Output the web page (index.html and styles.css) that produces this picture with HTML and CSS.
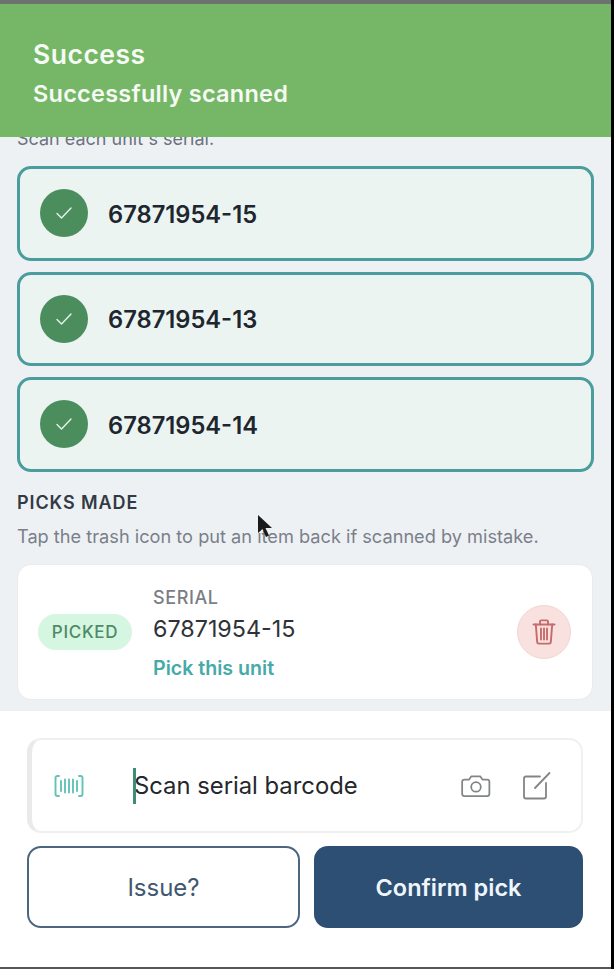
FILE: index.html
```html
<!DOCTYPE html>
<html lang="en">
<head>
<meta charset="utf-8">
<title>Confirm pick</title>
<link rel="stylesheet" href="styles.css">
</head>
<body>
<div class="screen">
  <div class="topline"></div>
  <main class="content">
    <p class="hint-top">Scan each unit's serial.</p>
    <div class="serial-list">
      <div class="serial-card">
        <span class="check"><svg width="20" height="20" viewBox="0 0 20 20" fill="none" stroke="currentColor" stroke-width="1.4" stroke-linecap="round" stroke-linejoin="round"><path d="M3 10.500l4.500 4.500 9.500-10"/></svg></span>
        <span class="serial-no">67871954-15</span>
      </div>
      <div class="serial-card">
        <span class="check"><svg width="20" height="20" viewBox="0 0 20 20" fill="none" stroke="currentColor" stroke-width="1.4" stroke-linecap="round" stroke-linejoin="round"><path d="M3 10.500l4.500 4.500 9.500-10"/></svg></span>
        <span class="serial-no">67871954-13</span>
      </div>
      <div class="serial-card">
        <span class="check"><svg width="20" height="20" viewBox="0 0 20 20" fill="none" stroke="currentColor" stroke-width="1.4" stroke-linecap="round" stroke-linejoin="round"><path d="M3 10.500l4.500 4.500 9.500-10"/></svg></span>
        <span class="serial-no">67871954-14</span>
      </div>
    </div>
    <h2 class="section-title">PICKS MADE</h2>
    <p class="section-hint">Tap the trash icon to put an item back if scanned by mistake.</p>
    <div class="pick-card">
      <span class="badge">PICKED</span>
      <div class="pick-info">
        <span class="pick-label">SERIAL</span>
        <span class="pick-value">67871954-15</span>
        <span class="pick-link">Pick this unit</span>
      </div>
      <button class="trash" type="button" aria-label="Remove">
        <svg width="26" height="28" viewBox="0 0 26 28" fill="none" stroke="currentColor" stroke-width="1.9" stroke-linecap="round" stroke-linejoin="round"><path d="M2.500 6.500h21"/><path d="M9 6.500V3.600q0-1.200 1.200-1.200h5.600q1.200 0 1.200 1.200v2.900"/><path d="M4.800 6.500l1.400 17.600q.1 1.500 1.600 1.500h10.400q1.500 0 1.600-1.500l1.400-17.600"/><path d="M10 10.500v11M13 10.500v11M16 10.500v11"/></svg>
      </button>
    </div>
  </main>
  <footer class="footer">
    <div class="scan-field">
      <svg class="scan-icon" width="30" height="24" viewBox="0 0 30 24" fill="none" stroke="currentColor" stroke-width="1.9" stroke-linecap="round" stroke-linejoin="round"><path d="M5 2H3.500Q1.500 2 1.500 4v16q0 2 2 2H5"/><path d="M25 2h1.500q2 0 2 2v16q0 2-2 2H25"/><path d="M7 7v10M11 5.500v13M15 5.500v13M19 5.500v13M23 7v10"/></svg>
      <span class="scan-text"><span class="caret"></span>Scan serial barcode</span>
      <svg class="tool-icon tool-camera" width="30" height="24" viewBox="0 0 32 26" fill="none" stroke="currentColor" stroke-width="1.900" stroke-linejoin="round"><path d="M3.500 6h5l2.500-3.500h9.500L23 6h5q2.500 0 2.500 2.500v13q0 2.500-2.500 2.500H3.500Q1 24 1 21.500v-13Q1 6 3.500 6z"/><circle cx="16" cy="14" r="5.200"/></svg>
      <svg class="tool-icon" width="30" height="30" viewBox="0 0 30 30" fill="none" stroke="currentColor" stroke-width="1.800" stroke-linecap="round" stroke-linejoin="round"><path d="M18 5.500H4Q2 5.500 2 7.500v18q0 2 2 2h18q2 0 2-2V12"/><path d="M13 17L27.500 2"/></svg>
    </div>
    <div class="actions">
      <button class="btn btn-outline" type="button">Issue?</button>
      <button class="btn btn-primary" type="button">Confirm pick</button>
    </div>
  </footer>
  <div class="toast">
    <div class="toast-title">Success</div>
    <div class="toast-text">Successfully scanned</div>
  </div>
  <svg class="cursor" width="16" height="24" viewBox="0 0 16 24"><path d="M1 1v18l4.500-4 3.500 8 3-1.500-3.500-7.500H15z" fill="#1a1a1a"/></svg>
</div>
</body>
</html>
```
FILE: styles.css
```css
* { box-sizing: border-box; }
html, body { margin: 0; padding: 0; }
body {
  width: 614px;
  height: 969px;
  overflow: hidden;
  background: #000;
  font-family: Inter, "Liberation Sans", sans-serif;
}
.screen {
  position: relative;
  width: 611px;
  height: 969px;
  display: flex;
  flex-direction: column;
  background: #eef1f4;
  overflow: hidden;
}
.topline { height: 4px; background: #6e726f; flex: none; }
.content {
  flex: 1;
  padding: 123px 17px 0;
  display: flex;
  flex-direction: column;
  min-height: 0;
}
.hint-top {
  margin: 0 0 15px;
  height: 24px;
  line-height: 24px;
  font-size: 18px;
  color: #6d7380;
}
.serial-list { display: flex; flex-direction: column; gap: 11px; width: 577px; }
.serial-card {
  height: 94.5px;
  display: flex;
  align-items: center;
  gap: 20px;
  padding-left: 20px;
  background: #ecf4f2;
  border: 3px solid #4a9d9c;
  border-radius: 14px;
}
.check {
  width: 48px;
  height: 48px;
  border-radius: 50%;
  background: #4b8d5d;
  color: #e6f3e8;
  display: flex;
  align-items: center;
  justify-content: center;
  flex: none;
}
.serial-no {
  font-size: 23.700px;
  line-height: 30px;
  padding-top: 3px;
  font-weight: 600;
  color: #20262e;
}
.section-title {
  margin: 21px 0 0;
  font-size: 18px;
  line-height: 20px;
  font-weight: 600;
  letter-spacing: 0.900px;
  color: #333a45;
}
.section-hint {
  margin: 13px 0 0;
  font-size: 18.200px;
  line-height: 20px;
  color: #7a808a;
  white-space: nowrap;
}
.pick-card {
  margin-top: 18.500px;
  width: 576px;
  height: 136px;
  flex: none;
  display: flex;
  align-items: center;
  padding: 0 21px 0 20px;
  background: #fff;
  border: 1px solid #e8ebef;
  border-radius: 14px;
}
.badge {
  width: 94px;
  height: 36px;
  border-radius: 18px;
  background: #d5f6e1;
  color: #4f8a67;
  font-size: 17px;
  font-weight: 500;
  letter-spacing: 0.700px;
  display: flex;
  align-items: center;
  justify-content: center;
  flex: none;
}
.pick-info {
  margin-left: 21px;
  padding-top: 3px;
  flex: 1;
  display: flex;
  flex-direction: column;
}
.pick-label { font-size: 18px; line-height: 22px; font-weight: 500; color: #7b7e83; letter-spacing: 0.600px; }
.pick-value { font-size: 23.300px; line-height: 32px; margin-top: 4px; color: #2f3338; }
.pick-link { font-size: 19.600px; line-height: 26px; margin-top: 10px; font-weight: 600; color: #45aaa8; }
.trash {
  width: 54px;
  height: 54px;
  padding: 0;
  border-radius: 50%;
  border: 1px solid #f1d6d4;
  background: #f9e1df;
  color: #c56b6b;
  display: flex;
  align-items: center;
  justify-content: center;
  flex: none;
}
.footer {
  height: 259px;
  flex: none;
  background: #fff;
  border-top: 1px solid #eef0ee;
  border-bottom: 2px solid #555;
  padding: 27px 28px 0 27px;
}
.scan-field {
  height: 95px;
  display: flex;
  align-items: center;
  background: #fff;
  border: 2px solid #f0f0ef;
  border-left: 5px solid #e9eaea;
  border-radius: 14px;
  padding: 0 29px 0 22px;
}
.scan-icon { color: #63c3b7; flex: none; }
.scan-text {
  position: relative;
  flex: 1;
  margin-left: 50px;
  font-size: 23.800px;
  line-height: 36px;
  color: #25282b;
}
.caret {
  position: absolute;
  left: -1px;
  top: 0;
  width: 3px;
  height: 36px;
  background: #3f8d74;
}
.tool-icon { color: #828587; flex: none; margin-left: 31px; }
.tool-camera { margin-left: 28px; }
.actions { display: flex; gap: 14px; margin-top: 13px; }
.btn {
  height: 82px;
  border-radius: 14px;
  font-family: inherit;
  font-size: 23.500px;
}
.btn-outline {
  width: 273px;
  background: #fff;
  border: 2px solid #4d6680;
  color: #3f5870;
  font-size: 24px;
  font-weight: 400;
}
.btn-primary {
  flex: 1;
  background: #2c4f73;
  border: none;
  color: #eef5fb;
  font-weight: 600;
}
.toast {
  position: absolute;
  left: 0;
  top: 4px;
  width: 100%;
  height: 133px;
  padding: 33px 33px 0;
  background: #75b767;
  color: #f6faf4;
  font-family: Inter, sans-serif;
}
.toast-title { font-size: 26.500px; line-height: 34px; font-weight: 600; letter-spacing: 0.500px; }
.toast-text { font-size: 23.500px; line-height: 34px; margin-top: 6px; font-weight: 600; letter-spacing: 0.250px; }
.cursor { position: absolute; left: 257px; top: 514px; }
```
